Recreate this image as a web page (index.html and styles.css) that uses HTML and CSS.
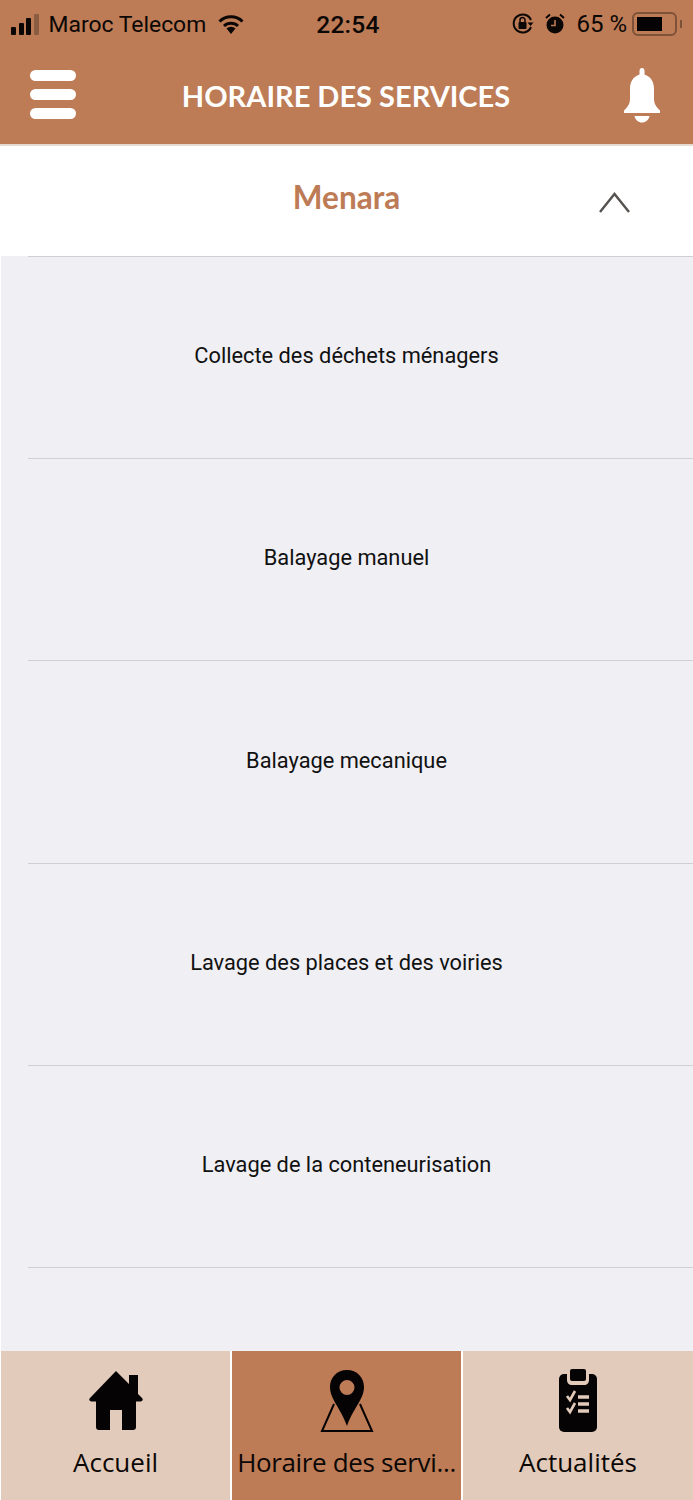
FILE: index.html
```html
<!DOCTYPE html>
<html>
<head>
    <title>Horaire des services</title>
    <link rel="stylesheet" href="styles.css">
</head>
<body>
    <div class="app">
        <div class="top">
            <div class="status">
                <div class="status-left">
                    <span class="signal"><i></i><i></i><i></i><i class="off"></i></span>
                    <span class="carrier">Maroc Telecom</span>
                    <svg class="wifi" width="26" height="20" viewBox="0 0 26 20">
                        <path d="M1.500 7.500a16.500 16.500 0 0 1 23 0" fill="none" stroke="#0b0705" stroke-width="3"/>
                        <path d="M6 12a10 10 0 0 1 14 0" fill="none" stroke="#0b0705" stroke-width="3"/>
                        <path d="M8.500 14.500a6.500 6.500 0 0 1 9 0L13 20z" fill="#0b0705"/>
                    </svg>
                </div>
                <div class="time">22:54</div>
                <div class="status-right">
                    <svg width="22" height="24" viewBox="0 0 22 24">
                        <path d="M19 15a9 9 0 1 1 0-7" fill="none" stroke="#0b0705" stroke-width="2"/>
                        <path d="M15.500 10.500h6L18.500 14z" fill="#0b0705"/>
                        <rect x="6.500" y="10" width="8" height="7" rx="1" fill="#0b0705"/>
                        <path d="M8 10V8a2.500 2.500 0 0 1 5 0v2" fill="none" stroke="#0b0705" stroke-width="1.500"/>
                    </svg>
                    <svg class="alarm" width="20" height="24" viewBox="0 0 20 24">
                        <circle cx="10" cy="13" r="8.500" fill="#0b0705"/>
                        <path d="M10 8v5.500H6" fill="none" stroke="#bd7b56" stroke-width="1.600"/>
                        <path d="M1 6l4-3.500M19 6l-4-3.500" stroke="#0b0705" stroke-width="2"/>
                    </svg>
                    <span class="percent">65 %</span>
                    <span class="battery"><span class="battery-fill"></span></span>
                    <span class="battery-tip"></span>
                </div>
            </div>
            <div class="header">
                <div class="burger"><i></i><i></i><i></i></div>
                <h1 class="title">HORAIRE DES SERVICES</h1>
                <svg class="bell" width="36" height="56" viewBox="0 0 36 56">
                    <path d="M18 0c1.500 0 2.500 1.200 2.500 3v3.500C27 8.500 30 14 30 21v10c0 5 2.500 8 6 11.500V45H0v-2.500C3.500 39 6 36 6 31V21C6 14 9 8.500 15.500 6.500V3C15.500 1.200 16.500 0 18 0z" fill="#fff"/>
                    <path d="M10.500 48h15c-.8 4-3.800 6.500-7.500 6.500s-6.700-2.500-7.500-6.500z" fill="#fff"/>
                </svg>
            </div>
        </div>

        <div class="section">
            <div class="section-name">Menara</div>
            <svg class="chevron" width="31" height="21" viewBox="0 0 31 21">
                <path d="M1 20L15.500 2 30 20" fill="none" stroke="#55524f" stroke-width="2.400"/>
            </svg>
        </div>

        <div class="list">
            <div class="row">Collecte des déchets ménagers</div>
            <div class="row">Balayage manuel</div>
            <div class="row">Balayage mecanique</div>
            <div class="row">Lavage des places et des voiries</div>
            <div class="row">Lavage de la conteneurisation</div>
        </div>

        <div class="tabs">
            <div class="tab">
                <div class="tab-icon">
                    <svg width="54" height="62" viewBox="0 0 54 62">
                        <path d="M27 1L40 14V5h9v19l4 4c1.500 1.500.5 3.500-1.500 3.500H47V57a3 3 0 0 1-3 3H33V40H21v20H10a3 3 0 0 1-3-3V31.500H2.500C.5 31.500-.5 29.500 1 28z" fill="#050303"/>
                    </svg>
                </div>
                <span class="tab-label">Accueil</span>
            </div>
            <div class="tab active">
                <div class="tab-icon">
                    <svg width="54" height="62" viewBox="0 0 54 62">
                        <path d="M14 34L2 61h50L40 34" fill="none" stroke="#050303" stroke-width="2"/>
                        <path fill-rule="evenodd" d="M27 0c10 0 17 7.500 17 17 0 12-10 20-17 39C20 37 10 29 10 17 10 7.500 17 0 27 0zm0 10a7.500 7.500 0 1 0 0 15 7.500 7.500 0 0 0 0-15z" fill="#050303"/>
                    </svg>
                </div>
                <span class="tab-label">Horaire des servi...</span>
            </div>
            <div class="tab">
                <div class="tab-icon">
                    <svg width="40" height="64" viewBox="0 0 40 64">
                        <rect x="1" y="5" width="38" height="58" rx="5" fill="#050303"/>
                        <path d="M9 5v6c0 3 2 5 5 5h12c3 0 5-2 5-5V5" fill="#e3cbbb"/>
                        <rect x="12" y="0" width="16" height="12" rx="2" fill="#050303"/>
                        <path d="M9 27l3 4 5-9M9 39l3 4 5-9" fill="none" stroke="#e3cbbb" stroke-width="2.600"/>
                        <path d="M20 28h11M20 35h11M20 42h11" stroke="#e3cbbb" stroke-width="3.500"/>
                    </svg>
                </div>
                <span class="tab-label">Actualités</span>
            </div>
        </div>
    </div>
</body>
</html>
```

FILE: styles.css
```css
* {
    box-sizing: border-box;
}
body {
    margin: 0;
    background-color: #fff;
    font-family: Roboto, "Liberation Sans", sans-serif;
}
.app {
    display: flex;
    flex-direction: column;
    height: 1500px;
    overflow: hidden;
}
.top {
    height: 146px;
    padding-left: 1px;
    background-color: #bd7b56;
    border-bottom: 2px solid #e6d9d0;
}
.status {
    display: grid;
    grid-template-columns: 1fr auto 1fr;
    align-items: center;
    height: 48px;
    padding: 0 11px 0 10px;
    color: #0b0705;
    font-size: 24px;
}
.status-left, .status-right {
    display: flex;
    align-items: center;
}
.status-right {
    justify-content: flex-end;
}
.signal {
    display: flex;
    align-items: flex-end;
    gap: 2.500px;
    height: 21px;
    margin-right: 10px;
}
.signal i {
    width: 5px;
    background-color: #0b0705;
    border-radius: 1px;
}
.signal i:nth-child(1) { height: 8px; }
.signal i:nth-child(2) { height: 12px; }
.signal i:nth-child(3) { height: 17px; }
.signal i.off {
    height: 21px;
    background-color: #8a5d43;
}
.carrier {
    font-size: 22.900px;
    white-space: nowrap;
}
.wifi {
    margin-left: 12px;
}
.time {
    margin-left: 3px;
    font-size: 24.500px;
    font-weight: 500;
    letter-spacing: 0.300px;
}
.alarm {
    margin-left: 11px;
}
.percent {
    margin: 0 5px 0 11px;
}
.battery {
    display: block;
    width: 45px;
    height: 24px;
    padding: 3px;
    border: 2px solid #7d5238;
    border-radius: 6px;
}
.battery-fill {
    display: block;
    width: 25px;
    height: 100%;
    background-color: #050303;
}
.battery-tip {
    width: 2px;
    height: 8px;
    margin-left: 3px;
    background-color: #7d5238;
}
.header {
    display: flex;
    align-items: center;
    justify-content: space-between;
    height: 96px;
    padding: 0 33px 0 29px;
}
.burger {
    display: flex;
    flex-direction: column;
    gap: 8px;
    width: 46px;
    margin-bottom: 4px;
}
.burger i {
    height: 11px;
    background-color: #fff;
    border-radius: 6px;
}
.title {
    margin: 0 8px 2px 0;
    color: #fff;
    font-family: Lato, sans-serif;
    font-size: 29px;
    font-weight: 700;
}
.section {
    display: flex;
    align-items: center;
    justify-content: center;
    position: relative;
    height: 109.600px;
    background-color: #fff;
}
.section-name {
    margin-bottom: 8px;
    color: #bd7b56;
    font-family: Lato, sans-serif;
    font-size: 31.500px;
    font-weight: 700;
}
.chevron {
    position: absolute;
    right: 63px;
    top: 46px;
}
.list {
    flex: 1;
    margin-left: 1px;
    background-color: #efeff4;
}
.row {
    display: flex;
    align-items: center;
    justify-content: center;
    height: 202.400px;
    margin-left: 27px;
    padding: 0 28px 4px 0;
    color: #111;
    font-size: 21.800px;
    border-top: 1px solid #cfcfd4;
}
.row:last-child {
    border-bottom: 1px solid #cfcfd4;
}
.tabs {
    display: grid;
    grid-template-columns: 229px 229px 1fr;
    gap: 2px;
    height: 149px;
    padding-left: 1px;
    background-color: #fff;
}
.tab {
    display: flex;
    flex-direction: column;
    align-items: center;
    padding-top: 18px;
    background-color: #e3cbbb;
}
.tab.active {
    background-color: #bd7b56;
}
.tab-icon {
    display: flex;
    align-items: center;
    justify-content: center;
    height: 64px;
}
.tab-label {
    margin-top: 11px;
    color: #0b0705;
    font-family: "Open Sans", sans-serif;
    font-size: 26px;
    line-height: 36px;
    white-space: nowrap;
}
.tab.active .tab-label {
    letter-spacing: -0.350px;
}
```
